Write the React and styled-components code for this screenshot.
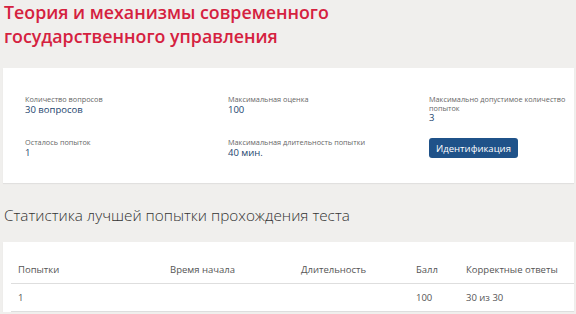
import React from "react";
import styled, { createGlobalStyle } from "styled-components";

const Global = createGlobalStyle`
  html, body { margin: 0; padding: 0; background: #f0efed; }
  body { font-family: "Open Sans", "Noto Sans", sans-serif; }
`;

const Page = styled.div`
  padding: 0 2px 0 3px;
`;

const Title = styled.h1`
  margin: 0 0 20px 1px;
  width: 340px;
  font-size: 17.8px;
  line-height: 24px;
  font-weight: 600;
  color: #d5213f;
`;

const Card = styled.section`
  background: #fff;
  box-shadow: 0 1px 1px rgba(0, 0, 0, 0.06);
  padding: ${(p) => p.$pad};
`;

const InfoGrid = styled.div`
  display: grid;
  grid-template-columns: 203px 201px 1fr;
  row-gap: 15px;
  padding-left: 22px;
`;

const Item = styled.div`
  display: flex;
  flex-direction: column;
  align-items: flex-start;
`;

const Label = styled.div`
  font-size: 7.3px;
  line-height: 8.5px;
  color: #666;
  padding-right: 4px;
`;

const Value = styled.div`
  font-size: 9.5px;
  line-height: 11px;
  color: #23456e;
`;

const Button = styled.button`
  width: 89px;
  height: 20px;
  border: 0;
  border-radius: 3px;
  background: #1f5289;
  color: #fff;
  font-family: "Open Sans", sans-serif;
  font-size: 9.5px;
  padding: 0;
`;

const Heading = styled.h2`
  margin: 20px 0 15px 1px;
  font-size: 15.3px;
  line-height: 24px;
  font-weight: 300;
  color: #333;
`;

const Table = styled.table`
  width: calc(100% - 8px);
  margin-left: 8px;
  border-collapse: collapse;
  font-size: 9.5px;
  color: #555;
`;

const Th = styled.th`
  text-align: left;
  font-weight: 400;
  height: 27px;
  padding: 0 7px;
  border-bottom: 1px solid #dedede;
  width: ${(p) => p.$w || "auto"};
  box-sizing: border-box;
`;

const Td = styled.td`
  height: 27px;
  padding: 0 7px;
  border-bottom: 1px solid #dedede;
`;

const info = [
  { label: "Количество вопросов", value: "30 вопросов" },
  { label: "Максимальная оценка", value: "100" },
  { label: "Максимально допустимое количество попыток", value: "3" },
  { label: "Осталось попыток", value: "1" },
  { label: "Максимальная длительность попытки", value: "40 мин." },
];

export default function App() {
  return (
    <>
      <Global />
      <Page>
        <Title>Теория и механизмы современного государственного управления</Title>
        <Card $pad="27px 0 25px">
          <InfoGrid>
            {info.map((i) => (
              <Item key={i.label}>
                <Label>{i.label}</Label>
                <Value>{i.value}</Value>
              </Item>
            ))}
            <Item>
              <Button>Идентификация</Button>
            </Item>
          </InfoGrid>
        </Card>
        <Heading>Статистика лучшей попытки прохождения теста</Heading>
        <Card $pad="14px 0 0">
          <Table>
            <thead>
              <tr>
                <Th $w="152px">Попытки</Th>
                <Th $w="131px">Время начала</Th>
                <Th $w="115px">Длительность</Th>
                <Th $w="50px">Балл</Th>
                <Th>Корректные ответы</Th>
              </tr>
            </thead>
            <tbody>
              <tr>
                <Td>1</Td>
                <Td></Td>
                <Td></Td>
                <Td>100</Td>
                <Td>30 из 30</Td>
              </tr>
            </tbody>
          </Table>
        </Card>
      </Page>
    </>
  );
}
